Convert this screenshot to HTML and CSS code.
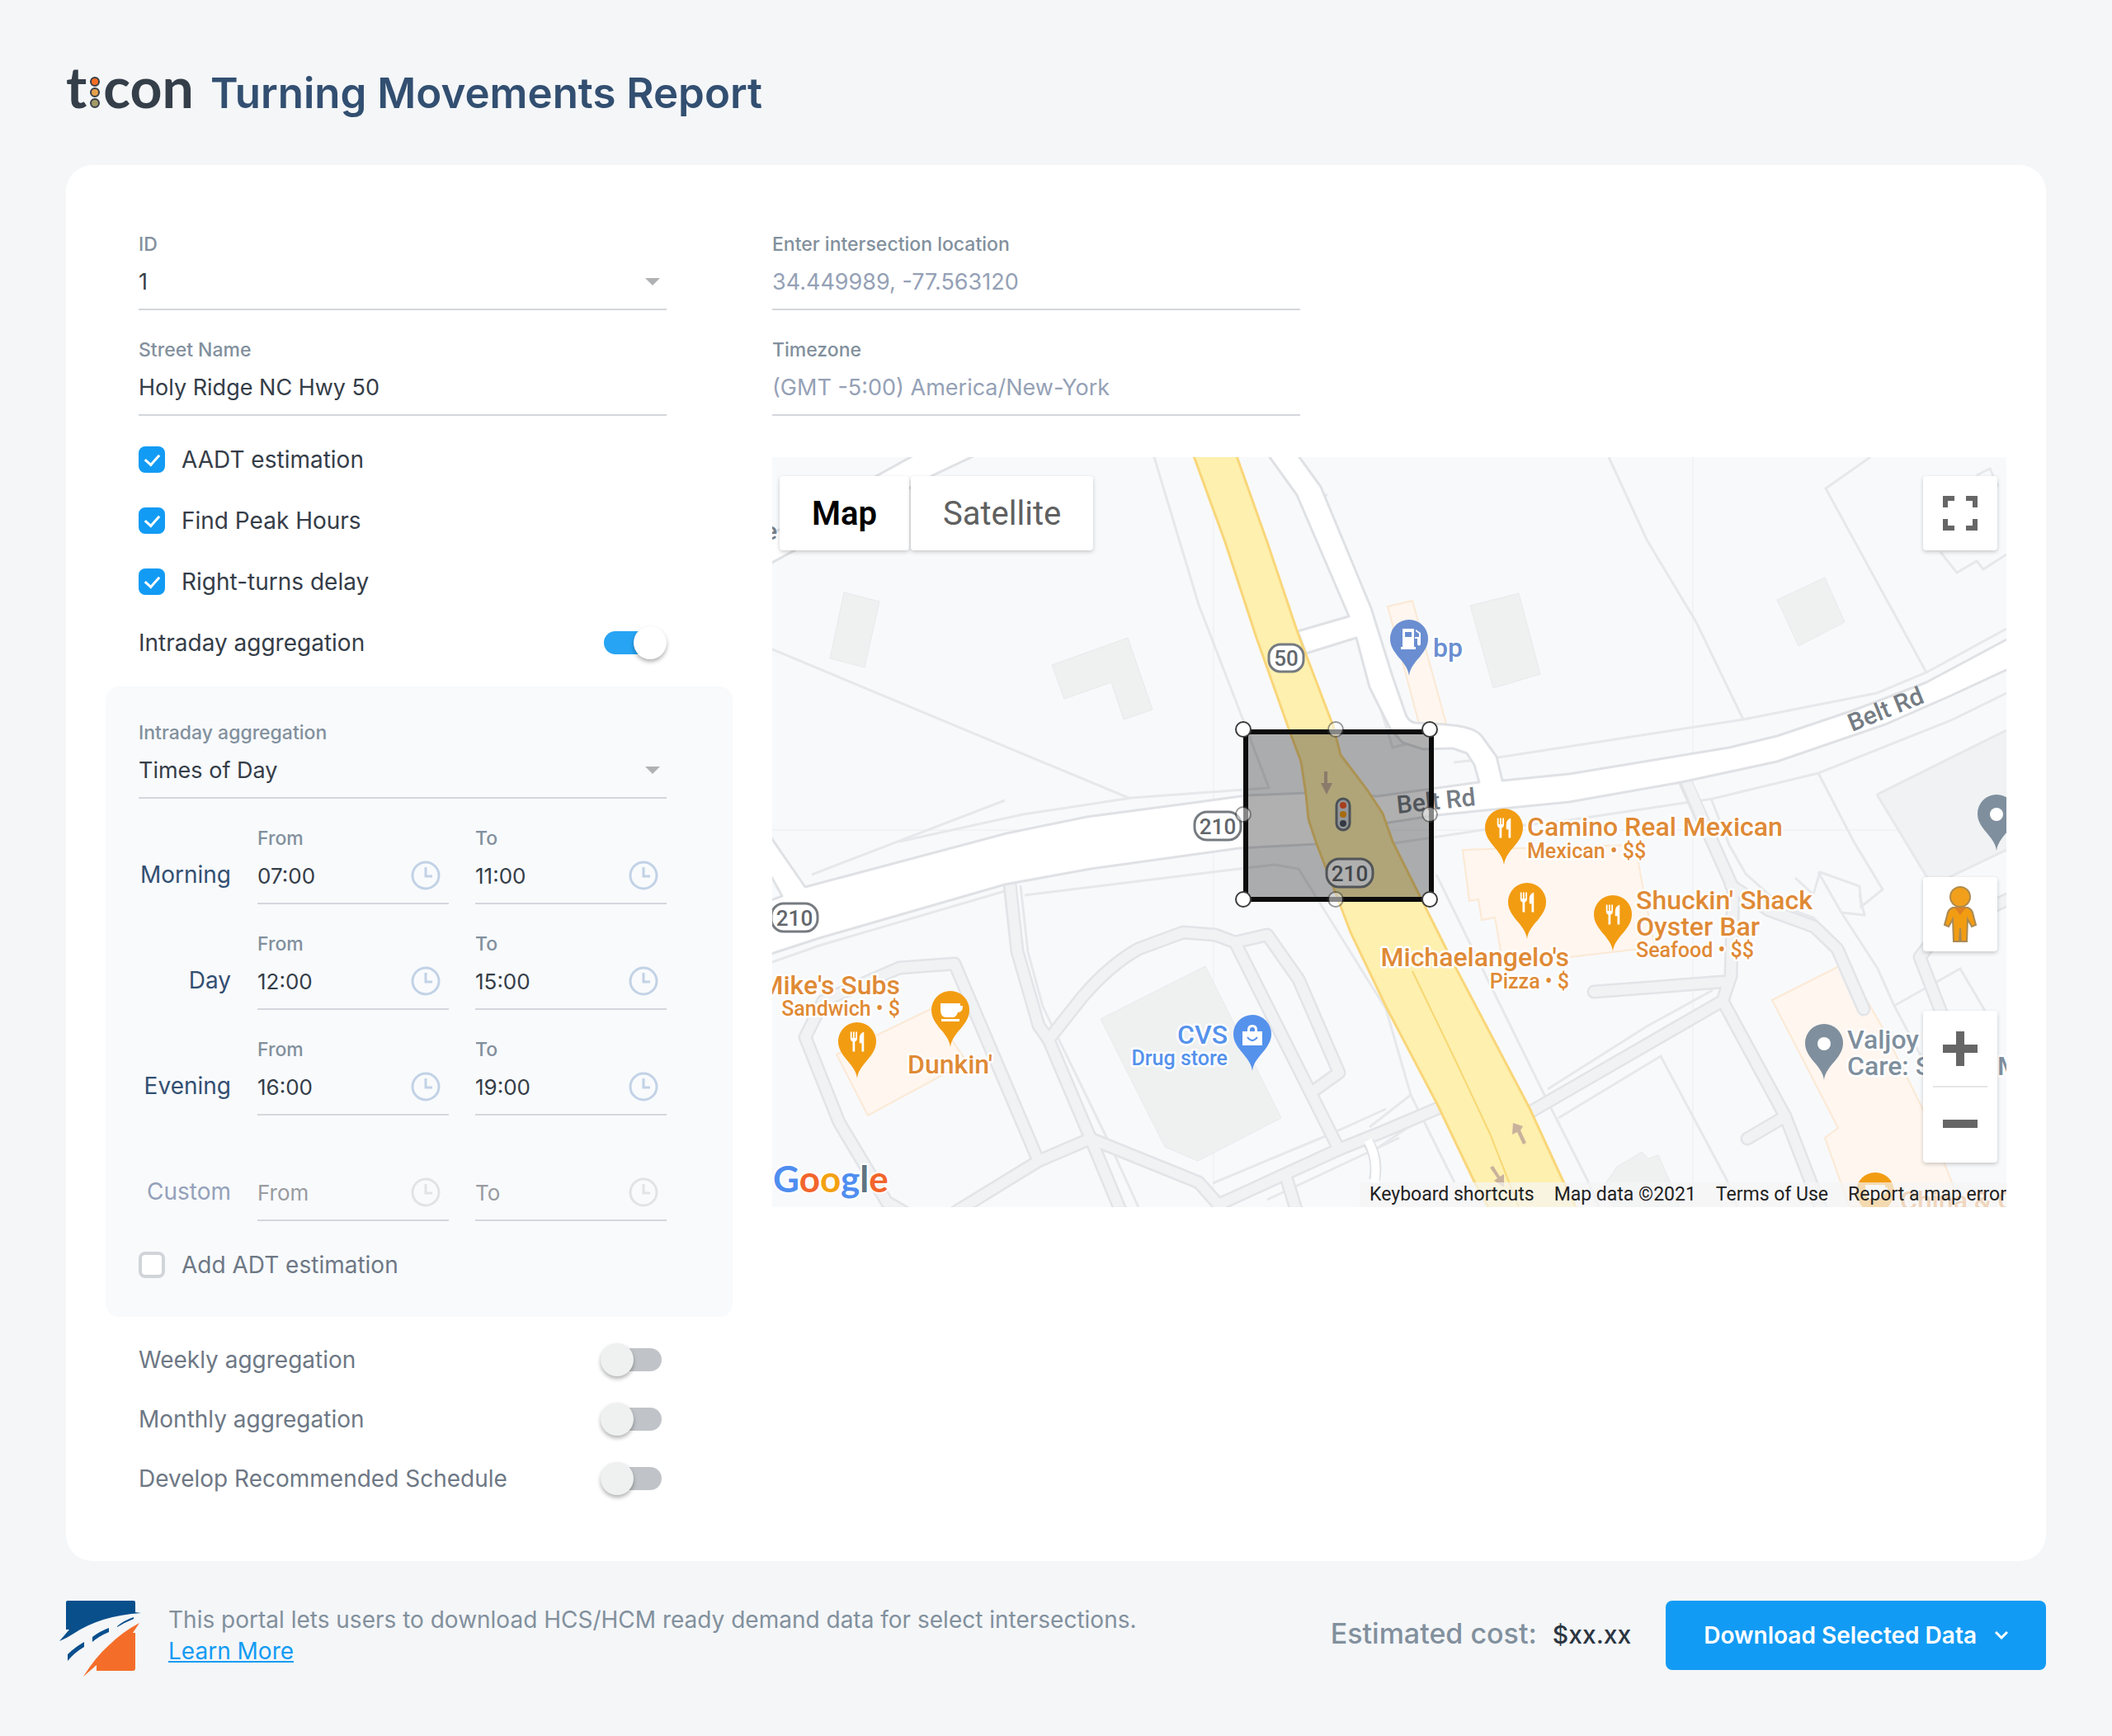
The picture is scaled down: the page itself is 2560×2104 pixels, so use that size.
FILE: index.html
```html
<!DOCTYPE html>
<html lang="en">
<head>
  <meta charset="UTF-8" />
  <meta name="viewport" content="width=device-width, initial-scale=1.0"/>
  <title>Turning Movements Report</title>
  <link rel="stylesheet" href="styles.css">
</head>
<body>
  <!-- shared icons -->
  <svg class="sprite" aria-hidden="true">
    <symbol id="clock" viewBox="0 0 36 36">
      <circle cx="18" cy="18" r="16" fill="none" stroke="currentColor" stroke-width="3"/>
      <path d="M18 8v11h8" fill="none" stroke="currentColor" stroke-width="3"/>
    </symbol>
    <symbol id="arrow" viewBox="0 0 18 9">
      <path d="M0 0h18l-9 9z" fill="currentColor"/>
    </symbol>
    <symbol id="pin" viewBox="-23 0 46 68" overflow="visible">
      <path d="M0 68C-2 50-23 42-23 23A23 23 0 0 1 23 23C23 42 2 50 0 68Z" fill="currentColor"/>
    </symbol>
    <symbol id="food" viewBox="0 0 24 28">
      <path d="M3 1v8q0 4 3 5v13h3V14q3-1 3-5V1h-2v8h-1.500V1h-2v8H5V1zM21 1q-6 2-6 9v6h3v11h3z" fill="#fff"/>
    </symbol>
  </svg>

  <header class="header">
    <div class="logo">
      <span>t</span>
      <svg class="lights" viewBox="0 0 12 38" aria-hidden="true">
        <circle cx="6" cy="6" r="5" fill="#f66d25" stroke="#353f4a" stroke-width="2"/>
        <circle cx="6" cy="19" r="5" fill="#e5a04a" stroke="#353f4a" stroke-width="2"/>
        <circle cx="6" cy="32" r="5" fill="#a39a66" stroke="#353f4a" stroke-width="2"/>
      </svg>
      <span>con</span>
    </div>
    <h1>Turning Movements Report</h1>
  </header>

  <main class="card">
    <form class="settings">
      <div class="inner">
        <div class="field">
          <label for="id">ID</label>
          <div class="control">
            <select id="id"><option>1</option></select>
            <svg class="arrow"><use href="#arrow"/></svg>
          </div>
        </div>
        <div class="field">
          <label for="street">Street Name</label>
          <div class="control"><input id="street" type="text" value="Holy Ridge NC Hwy 50"></div>
        </div>

        <div class="options">
          <label class="check"><input type="checkbox" checked><span>AADT estimation</span></label>
          <label class="check"><input type="checkbox" checked><span>Find Peak Hours</span></label>
          <label class="check"><input type="checkbox" checked><span>Right-turns delay</span></label>
          <label class="switch"><span>Intraday aggregation</span><input type="checkbox" checked></label>
        </div>
      </div>

      <div class="inner panel">
        <div class="field">
          <label for="mode">Intraday aggregation</label>
          <div class="control">
            <select id="mode"><option>Times of Day</option></select>
            <svg class="arrow"><use href="#arrow"/></svg>
          </div>
        </div>

        <div class="period">
          <span class="period-name">Morning</span>
          <div class="field">
            <label for="m-from">From</label>
            <div class="control"><input id="m-from" type="text" value="07:00"><svg class="clock"><use href="#clock"/></svg></div>
          </div>
          <div class="field">
            <label for="m-to">To</label>
            <div class="control"><input id="m-to" type="text" value="11:00"><svg class="clock"><use href="#clock"/></svg></div>
          </div>
        </div>
        <div class="period">
          <span class="period-name">Day</span>
          <div class="field">
            <label for="d-from">From</label>
            <div class="control"><input id="d-from" type="text" value="12:00"><svg class="clock"><use href="#clock"/></svg></div>
          </div>
          <div class="field">
            <label for="d-to">To</label>
            <div class="control"><input id="d-to" type="text" value="15:00"><svg class="clock"><use href="#clock"/></svg></div>
          </div>
        </div>
        <div class="period">
          <span class="period-name">Evening</span>
          <div class="field">
            <label for="e-from">From</label>
            <div class="control"><input id="e-from" type="text" value="16:00"><svg class="clock"><use href="#clock"/></svg></div>
          </div>
          <div class="field">
            <label for="e-to">To</label>
            <div class="control"><input id="e-to" type="text" value="19:00"><svg class="clock"><use href="#clock"/></svg></div>
          </div>
        </div>
        <div class="period custom">
          <span class="period-name">Custom</span>
          <div class="field">
            <div class="control"><input type="text" placeholder="From" aria-label="From"><svg class="clock"><use href="#clock"/></svg></div>
          </div>
          <div class="field">
            <div class="control"><input type="text" placeholder="To" aria-label="To"><svg class="clock"><use href="#clock"/></svg></div>
          </div>
        </div>

        <div class="options">
          <label class="check muted"><input type="checkbox"><span>Add ADT estimation</span></label>
        </div>
      </div>

      <div class="inner switches">
        <label class="switch"><span>Weekly aggregation</span><input type="checkbox"></label>
        <label class="switch"><span>Monthly aggregation</span><input type="checkbox"></label>
        <label class="switch"><span>Develop Recommended Schedule</span><input type="checkbox"></label>
      </div>
    </form>

    <section class="location">
      <div class="location-fields">
        <div class="field">
          <label for="coords">Enter intersection location</label>
          <div class="control"><input id="coords" type="text" placeholder="34.449989, -77.563120"></div>
        </div>
        <div class="field">
          <label for="tz">Timezone</label>
          <div class="control"><input id="tz" type="text" placeholder="(GMT -5:00) America/New-York"></div>
        </div>
      </div>

      <div class="map">
        <svg class="map-canvas" viewBox="0 0 1496 909" preserveAspectRatio="xMidYMid slice">
          <rect width="1496" height="909" fill="#f8f9fb"/>
          <path class="tile" d="M535 0V909M1116 0V909M0 452H1496"/>

          <!-- blocks and buildings -->
          <path d="M1339 409L1496 331V476L1404 520z" fill="#f0f2f4"/>
          <g class="building">
            <path d="M87 164L130 175L112 255L70 244z"/>
            <path d="M431 219L461 306L426 318L411 273L354 293L339 252z"/>
            <path d="M846 180L905 165L931 263L874 280z"/>
            <path d="M1218 173L1276 146L1300 200L1244 229z"/>
            <path d="M525 617L617 801L516 853L476 836L398 681z"/>
            <path d="M1010 880L1024 860L1054 842L1062 850L1074 846L1089 880L1100 909H1020z"/>
          </g>
          <g class="shop">
            <path d="M746 181L776 174L817 323H784z"/>
            <path d="M192 669L236 733L116 798L78 724z"/>
            <path d="M837 476L1046 470L1057 530L1070 594L966 606L885 610L876 558L860 561L856 536L845 538z"/>
            <path d="M1212 658L1301 613L1345 690L1394 789L1442 909H1306L1276 825L1292 813z"/>
          </g>

          <!-- parcel lines -->
          <g class="parcel">
            <path d="M463 0L517 179L571 319L602 401L435 413L304 433L154 466"/>
            <path d="M0 233L432 413"/>
            <path d="M1014 0L1060 100L1120 200L1177 318"/>
            <path d="M1331 0L1277 38L1399 261"/>
            <path d="M826 370L880 364L1177 318L1339 286L1399 261L1496 208"/>
            <path d="M966 440L1140 414L1268 383L1429 319L1496 286"/>
            <path d="M747 469L860 452L966 440"/>
            <path d="M1339 409L1496 331M1339 409L1404 516L1399 560M1404 520L1496 476"/>
            <path d="M1268 383L1311 466L1346 524L1320 545L1318 520L1270 503L1262 530L1240 510"/>
            <path d="M1268 503L1296 552L1324 555L1318 530M1296 552L1340 620L1360 665L1440 620L1470 671M1360 665L1400 740"/>
            <path d="M306 531L566 499L609 494L638 499L663 539L744 669L774 773L789 803L827 879"/>
            <path d="M805 506L875 649L936 773L988 876L1002 909"/>
            <path d="M940 766L1060 690L1140 646M953 801L1077 726L1157 876L1170 909"/>
            <path d="M301 519L310 600L328 666L406 826L444 909"/>
            <path d="M724 812L774 773M730 840L789 800M534 880L673 822L744 790M600 900L760 825"/>
            <path d="M48 506L282 416M0 612L57 592L282 526"/>
            <path d="M673 46L648 46L712 194M712 222L752 352L800 340"/>
            <path d="M1138 414L1160 470L1180 505L1225 545L1262 558L1290 590"/>
            <path d="M1416 115L1436 140L1460 126L1468 136L1496 118M1460 22L1476 14L1486 36"/>
          </g>

          <!-- minor roads, casing first -->
          <g class="minor-case">
            <path d="M288 518L297 599L323 689L335 706L386 826L423 915"/>
            <path d="M335 706L377 653Q410 615 444 596L498 576L537 579L561 588L687 839"/>
            <path d="M561 588L600 579L638 633L687 746L655 769"/>
            <path d="M222 915L323 853L386 826L517 879L541 906L687 839L744 816L812 787"/>
            <path d="M321 849L221 614L154 619L115 636L62 659L40 703L81 806L139 903L160 915"/>
            <path d="M624 876L636 915"/>
            <path d="M920 793L1152 659L1162 629L1165 523L1135 456L1107 394"/>
            <path d="M1152 659L1228 799L1273 915"/>
            <path d="M996 648L1152 636M1228 799L1182 826"/>
            <path d="M1162 519L1208 549L1263 569L1291 596L1323 669"/>
            <path d="M1500 535L1415 575L1391 606L1417 673"/>
          </g>
          <g class="minor">
            <path d="M288 514L297 599L323 689L335 706L386 826L423 915"/>
            <path d="M335 706L377 653Q410 615 444 596L498 576L537 579L561 588L687 839"/>
            <path d="M561 588L600 579L638 633L687 746L655 769"/>
            <path d="M222 915L323 853L386 826L517 879L541 906L687 839L744 816L812 787"/>
            <path d="M321 849L221 614L154 619L115 636L62 659L40 703L81 806L139 903L160 915"/>
            <path d="M624 876L636 915"/>
            <path d="M920 793L1152 659L1162 629L1165 523L1135 456L1107 390"/>
            <path d="M1152 659L1228 799L1273 915"/>
            <path d="M996 648L1152 636M1228 799L1182 826"/>
            <path d="M1162 519L1208 549L1263 569L1291 596L1323 669"/>
            <path d="M1500 535L1415 575L1391 606L1417 673"/>
          </g>
          <path d="M722 830Q735 850 730 876" fill="none" stroke="#e0e2e5" stroke-width="14"/>
          <path d="M722 828Q735 850 730 880" fill="none" stroke="#fff" stroke-width="10"/>

          <!-- white roads -->
          <g class="road">
            <path d="M-4 95L175 -4H250L195 22L-4 130z"/>
            <path d="M-4 455L0 463L40 521L284 456L381 436L517 418L575 410L647 407H660L734 411L857 394L851 373L842 359L825 353L789 354L764 346L749 329L724 279L708 219L647 238L637 211L699 193L636 46L600 -4H636L665 36L726 183L752 266L767 309Q770 320 779 322L815 324Q850 326 860 338L878 363L885 392L966 384L1160 352L1218 338L1313 306L1399 273L1500 219V256L1429 289L1349 324L1218 369L1102 394L966 418L805 434L747 443L660 469L566 474L386 499L282 518L57 583L-4 603V538L12 532L-4 503z"/>
          </g>

          <!-- highway 50 -->
          <path class="highway" d="M510 -4L549 103L587 219L626 329L641 369L647 409L650 439L660 469L687 539L701 576L744 666L807 786L850 876L870 913H976L958 876L918 789L827 616L787 536L752 466L740 432L721 403L689 361L680 326L637 213L600 103L562 -4z"/>
          <path d="M776 623L830 735L870 820L905 909" fill="none" stroke="#f7d774" stroke-width="2"/>
          <g class="lane-arrow">
            <path d="M669 381h4v14h6l-7 14-7-14h4z"/>
            <path d="M898 807l12 4-3 5 7 15-4 2-7-15-6 3z"/>
            <path d="M870 861l4-2 8 13 5-3v16l-12-8 4-3z"/>
          </g>

          <!-- road names -->
          <g class="road-name">
            <text x="-10" y="100">e</text>
            <text transform="translate(1309 333) rotate(-22)">Belt Rd</text>
            <text transform="translate(758 432) rotate(-6)">Belt Rd</text>
          </g>

          <g class="shield">
            <rect x="602" y="227" width="42" height="33" rx="14"/>
            <text x="623" y="253">50</text>
            <rect x="512" y="430" width="56" height="34" rx="15"/>
            <text x="540" y="457">210</text>
            <rect x="672" y="487" width="56" height="34" rx="15"/>
            <text x="700" y="514">210</text>
            <rect x="-1" y="541" width="56" height="34" rx="15"/>
            <text x="27" y="568">210</text>
          </g>

          <!-- traffic light -->
          <rect x="684" y="414" width="16" height="38" rx="8" fill="#d6dae0" stroke="#71777e" stroke-width="3"/>
          <circle cx="692" cy="422" r="4" fill="#f25c2a"/>
          <circle cx="692" cy="433" r="4" fill="#f29c12"/>
          <circle cx="692" cy="444" r="4" fill="#4c5560"/>

          <!-- places -->
          <g class="place gold">
            <use href="#pin" x="864" y="426" width="46" height="68"/>
            <use href="#food" x="876" y="436" width="22" height="27"/>
            <text x="915" y="459">Camino Real Mexican</text>
            <text class="kind" x="915" y="486">Mexican • $$</text>

            <use href="#pin" x="892" y="516" width="46" height="68"/>
            <use href="#food" x="904" y="526" width="22" height="27"/>
            <text class="end" x="966" y="617">Michaelangelo's</text>
            <text class="kind end" x="966" y="644">Pizza • $</text>

            <use href="#pin" x="996" y="531" width="46" height="68"/>
            <use href="#food" x="1008" y="541" width="22" height="27"/>
            <text x="1047" y="548">Shuckin' Shack</text>
            <text x="1047" y="580">Oyster Bar</text>
            <text class="kind" x="1047" y="606">Seafood • $$</text>

            <use href="#pin" x="80" y="685" width="46" height="68"/>
            <use href="#food" x="92" y="695" width="22" height="27"/>
            <text class="end" x="155" y="651">Mike's Subs</text>
            <text class="kind end" x="155" y="677">Sandwich • $</text>

            <use href="#pin" x="193" y="647" width="46" height="68"/>
            <path d="M204 662h24v3h3q0 8-6 8-2 6-6 6h-8q-7 0-7-9zM205 681h22v3h-22z" fill="#fff"/>
            <text x="164" y="747">Dunkin'</text>

            <use href="#pin" x="1314" y="867" width="46" height="68"/>
            <path d="M1325 882h24v3h3q0 8-6 8-2 6-6 6h-8q-7 0-7-9z" fill="#fff"/>
            <text x="1367" y="912">China &amp; G</text>
          </g>

          <g class="place slate-blue">
            <use href="#pin" x="749" y="197" width="46" height="68"/>
            <path d="M764 208h14v22h2v3h-18v-3h2zM767 212v6h8v-6zM780 209l6 4v14q-2 3-4 0v-7h-3v-2h5v-4l-4-3z" fill="#fff" fill-rule="evenodd"/>
            <text x="801" y="242">bp</text>
          </g>

          <g class="place blue">
            <use href="#pin" x="559" y="676" width="46" height="68"/>
            <path d="M570 696h6v-2q0-6 6-6t6 6v2h6v17h-24zM579 696h6v-2q0-3-3-3t-3 3z" fill="#fff" fill-rule="evenodd"/>
            <path d="M576 703q6 8 12 0" fill="none" stroke="currentColor" stroke-width="2"/>
            <text class="end" x="552" y="711">CVS</text>
            <text class="kind end" x="552" y="737">Drug store</text>
          </g>

          <g class="place slate">
            <use href="#pin" x="1252" y="687" width="46" height="68"/>
            <circle cx="1275" cy="711" r="8" fill="#fff"/>
            <text x="1303" y="717">Valjoy</text>
            <text x="1303" y="749">Care: S</text>
            <text x="1485" y="749">M</text>
            <use href="#pin" x="1461" y="409" width="46" height="68"/>
            <circle cx="1484" cy="433" r="8" fill="#fff"/>
          </g>

          <!-- selected area -->
          <rect x="574" y="333" width="225" height="203" fill="#000" fill-opacity=".31" stroke="#0c0c0c" stroke-width="6"/>
          <g fill="#fff" stroke="#3c3c3c" stroke-width="2">
            <circle cx="571" cy="330" r="9"/>
            <circle cx="797" cy="330" r="9"/>
            <circle cx="571" cy="536" r="9"/>
            <circle cx="797" cy="536" r="9"/>
            <g opacity=".5">
              <circle cx="683" cy="330" r="9"/>
              <circle cx="571" cy="433" r="9"/>
              <circle cx="797" cy="433" r="9"/>
              <circle cx="683" cy="536" r="9"/>
            </g>
          </g>

          <text class="google" x="1" y="891"><tspan fill="#4f8ef0">G</tspan><tspan fill="#f2652c">o</tspan><tspan fill="#f3a112">o</tspan><tspan fill="#4f8ef0">g</tspan><tspan fill="#5f7480">l</tspan><tspan fill="#f2652c">e</tspan></text>
        </svg>

        <div class="map-type">
          <button type="button" class="active">Map</button>
          <button type="button">Satellite</button>
        </div>
        <button type="button" class="map-btn fullscreen" aria-label="Fullscreen">
          <svg width="42" height="42" viewBox="0 0 42 42" fill="none" stroke="#666" stroke-width="6"><path d="M3 14V3h11M28 3h11v11M39 28v11H28M14 39H3V28"/></svg>
        </button>
        <div class="map-tools">
          <button type="button" class="map-btn" aria-label="Street View">
            <svg width="42" height="68" viewBox="0 0 42 68">
              <path d="M12 26q-6 2-7 10L2 47l5 2 5-9 1 27h7l1-16 1 16h7l1-27 5 9 5-2-3-11q-1-8-7-10z" fill="#f29c12" stroke="#a98a55" stroke-width="2"/>
              <path d="M14 26h14l-7 9z" fill="#e07f22"/>
              <circle cx="21" cy="13" r="12" fill="#f2a01c" stroke="#b08a4a" stroke-width="2"/>
            </svg>
          </button>
          <div class="zoom">
            <button type="button" aria-label="Zoom in"><svg width="42" height="42" viewBox="0 0 42 42"><path d="M0 21h42M21 0v42" stroke="#666" stroke-width="10"/></svg></button>
            <button type="button" aria-label="Zoom out"><svg width="42" height="42" viewBox="0 0 42 42"><path d="M0 21h42" stroke="#666" stroke-width="10"/></svg></button>
          </div>
        </div>
        <div class="map-credits">
          <a href="#">Keyboard shortcuts</a>
          <span>Map data ©2021</span>
          <a href="#">Terms of Use</a>
          <a href="#">Report a map error</a>
        </div>
      </div>
    </section>
  </main>

  <footer class="footer">
    <svg class="brand" viewBox="0 0 100 92" aria-hidden="true">
      <path d="M8 2q0-2 2-2h80q2 0 2 2v12l7 1Q50 18 17 40 8 46 0 49l12-14H8z" fill="#084f8c"/>
      <path d="M70 31q8-7 20-11v2q-10 4-20 10zM40 44q9-7 20-11v5q-12 5-20 12zM10 65q8-8 20-15v6Q18 63 10 73z" fill="#084f8c"/>
      <path d="M97 27L89 39h3v43q0 3-3 3H45v-7L29 92Q44 68 60 54 76 38 97 27z" fill="#f46e2a"/>
    </svg>
    <p class="about">This portal lets users to download HCS/HCM ready demand data for select intersections.<br><a href="#">Learn More</a></p>
    <p class="cost">Estimated cost: <strong>$xx.xx</strong></p>
    <button type="button" class="download">
      Download Selected Data
      <svg width="16" height="10" viewBox="0 0 16 10" fill="none" stroke="#fff" stroke-width="3"><path d="M1 1l7 7 7-7"/></svg>
    </button>
  </footer>
</body>
</html>
```
FILE: styles.css
```css
* {
  box-sizing: border-box;
}

body {
  margin: 0;
  padding: 0 80px 64px;
  font-family: Inter, sans-serif;
  font-size: 28px;
  color: #353d48;
  background: #f4f6f8;
}

input, select, button {
  font: inherit;
  color: inherit;
}

.sprite {
  display: block;
  width: 0;
  height: 0;
}

/* Header */
.header {
  display: flex;
  align-items: baseline;
  gap: 20px;
  padding: 62px 0 51px;
}

.logo {
  display: flex;
  align-items: baseline;
  font: bold 68px/86px Lato, sans-serif;
  color: #353f4a;
}

.lights {
  width: 20px;
  height: 38px;
}

.header h1 {
  margin: 0;
  font-size: 51px;
  line-height: 72px;
  font-weight: 600;
  color: #324f71;
}

/* Card */
.card {
  display: grid;
  grid-template-columns: minmax(0, 760px) minmax(0, 1fr);
  gap: 48px;
  padding: 48px 48px 64px;
  background: #fff;
  border-radius: 32px;
}

.inner {
  padding: 0 80px 0 40px;
}

.field {
  padding-top: 32px;
}

.field label {
  display: block;
  font-size: 23px;
  line-height: 32px;
  font-weight: 500;
  color: #82909d;
}

.control {
  display: flex;
  align-items: center;
  height: 64px;
  padding-bottom: 4px;
  font-size: 27px;
  border-bottom: 2px solid #d3d7dd;
}

.control input,
.control select {
  flex: 1;
  min-width: 0;
  height: 58px;
  padding: 0;
  border: none;
  outline: none;
  background: none;
  appearance: none;
}

.control input::placeholder {
  color: #95a1b6;
  opacity: 1;
}

.arrow {
  width: 18px;
  height: 9px;
  margin-right: 8px;
  color: #b0b1b3;
}

.clock {
  width: 36px;
  height: 36px;
  margin-right: 10px;
  color: #c2d2e6;
}

/* Check boxes and switches */
.options {
  padding: 16px 0;
}

.check, .switch {
  display: flex;
  align-items: center;
  height: 74px;
}

.check {
  gap: 20px;
}

.check input {
  appearance: none;
  display: grid;
  place-items: center;
  width: 32px;
  height: 32px;
  margin: 0;
  border: 4px solid #d1d4d9;
  border-radius: 8px;
  background: #fff;
}

.check input:checked {
  border-color: #129bf4;
  background: #129bf4;
}

.check input:checked::after {
  content: "";
  width: 8px;
  height: 14px;
  margin-bottom: 4px;
  border: solid #fff;
  border-width: 0 3px 3px 0;
  transform: rotate(42deg);
}

.switch {
  justify-content: space-between;
}

.switch input {
  appearance: none;
  position: relative;
  width: 80px;
  height: 40px;
  margin: 0;
}

.switch input::before {
  content: "";
  position: absolute;
  inset: 6px 6px 6px 4px;
  border-radius: 14px;
  background: #c0c4c8;
}

.switch input::after {
  content: "";
  position: absolute;
  left: 0;
  width: 40px;
  height: 40px;
  border-radius: 50%;
  background: #eff1f1;
  box-shadow: 0 3px 5px rgba(0, 0, 0, 0.3);
}

.switch input:checked::before {
  background: #27a4f4;
}

.switch input:checked::after {
  left: 40px;
  background: #fff;
}

.switches .switch {
  height: 72px;
  color: #6e7885;
}

.muted {
  color: #6e7885;
}

/* Intraday panel */
.panel {
  margin-bottom: 16px;
  padding-top: 8px;
  padding-bottom: 10px;
  background: #f8fafc;
  border-radius: 16px;
}

.period {
  display: grid;
  grid-template-columns: 112px minmax(0, 1fr) minmax(0, 1fr);
  gap: 32px;
  align-items: end;
  height: 128px;
}

.period .control {
  font-size: 26px;
}

.period-name {
  height: 64px;
  line-height: 56px;
  text-align: right;
  color: #334f71;
}

.custom .period-name {
  color: #95a1b9;
}

.custom .control input::placeholder {
  color: #999b9f;
}

.custom .clock {
  color: #e1e3e6;
}

/* Map */
.location-fields {
  max-width: 640px;
}

.map {
  position: relative;
  margin-top: 50px;
  overflow: hidden;
  font-family: Roboto, sans-serif;
}

.map-canvas {
  display: block;
  width: 100%;
}

.tile {
  fill: none;
  stroke: #f2f3f5;
  stroke-width: 2;
}

.building {
  fill: #eff1f1;
  stroke: #e7eaea;
}

.shop {
  fill: #fef6ef;
  stroke: #fbe9d4;
  stroke-width: 2;
}

.parcel {
  fill: none;
  stroke: #e6e8eb;
  stroke-width: 3;
}

.minor-case {
  fill: none;
  stroke: #e2e4e8;
  stroke-width: 17;
  stroke-linecap: round;
  stroke-linejoin: round;
}

.minor {
  fill: none;
  stroke: #f0f2f4;
  stroke-width: 12;
  stroke-linecap: round;
  stroke-linejoin: round;
}

.road {
  fill: #fff;
  stroke: #dfe1e5;
  stroke-width: 3;
  stroke-linejoin: round;
}

.highway {
  fill: #fef0ae;
  stroke: #f9d67a;
  stroke-width: 3;
}

.lane-arrow {
  fill: #c9b29c;
}

.road-name {
  font-size: 30px;
  font-weight: 500;
  fill: #757c84;
}

.shield rect {
  fill: #fff;
  stroke: #767b80;
  stroke-width: 3;
}

.shield text {
  font-size: 26px;
  font-weight: 500;
  text-anchor: middle;
  fill: #62666b;
}

.place text {
  font-size: 32px;
  font-weight: 500;
  fill: currentColor;
  stroke: #fff;
  stroke-width: 5;
  stroke-linejoin: round;
  paint-order: stroke;
}

.place .kind {
  font-size: 25px;
}

.place .end {
  text-anchor: end;
}

.gold {
  color: #f29c12;
}

.gold text {
  fill: #df8a36;
}

.slate-blue {
  color: #6a8ed1;
}

.blue {
  color: #5592ec;
}

.slate {
  color: #7f8f9d;
}

.google {
  font: bold 44px Lato, sans-serif;
  stroke: #fff;
  stroke-width: 4;
  paint-order: stroke;
}

.map-type {
  position: absolute;
  top: 23px;
  left: 9px;
  display: flex;
  gap: 2px;
}

.map button {
  border: none;
  background: #fff;
}

.map-type button {
  height: 90px;
  padding: 0 39px;
  font-size: 40px;
  color: #606060;
  border-radius: 4px;
  box-shadow: 0 2px 5px rgba(0, 0, 0, 0.2);
}

.map-type .active {
  font-weight: 600;
  color: #000;
}

.map-btn, .zoom button {
  display: grid;
  place-items: center;
  width: 90px;
  height: 90px;
  padding: 0;
}

.map-btn, .zoom {
  border-radius: 4px;
  background: #fff;
  box-shadow: 0 2px 5px rgba(0, 0, 0, 0.2);
}

.fullscreen {
  position: absolute;
  top: 23px;
  right: 11px;
}

.map-tools {
  position: absolute;
  right: 11px;
  bottom: 54px;
  display: grid;
  gap: 72px;
}

.zoom {
  padding: 1px 0;
}

.map .zoom button + button {
  height: 92px;
  background: linear-gradient(#e6e6e6, #e6e6e6) center top / 66px 2px no-repeat;
}

.map-credits {
  position: absolute;
  right: 0;
  bottom: 0;
  display: flex;
  gap: 24px;
  padding-left: 12px;
  font-size: 23px;
  line-height: 30px;
  color: #222;
  background: rgba(245, 245, 245, 0.7);
}

.map-credits a {
  color: inherit;
  text-decoration: none;
}

/* Footer */
.footer {
  display: flex;
  align-items: flex-start;
  padding-top: 48px;
}

.brand {
  width: 100px;
  height: 92px;
  margin-left: -8px;
}

.about {
  flex: 1;
  margin: 4px 0 0 32px;
  line-height: 38px;
  color: #82909d;
}

.about a {
  color: #129bf4;
}

.cost {
  margin: 0 42px 0 0;
  font-size: 34px;
  line-height: 80px;
  font-weight: 500;
  color: #82909d;
}

.cost strong {
  margin-left: 10px;
  font-size: 30px;
  font-weight: 500;
  color: #2c3541;
}

.download {
  display: flex;
  align-items: center;
  gap: 22px;
  height: 84px;
  padding: 0 46px;
  font-weight: 600;
  color: #fff;
  background: #129bf4;
  border: none;
  border-radius: 8px;
}
```
